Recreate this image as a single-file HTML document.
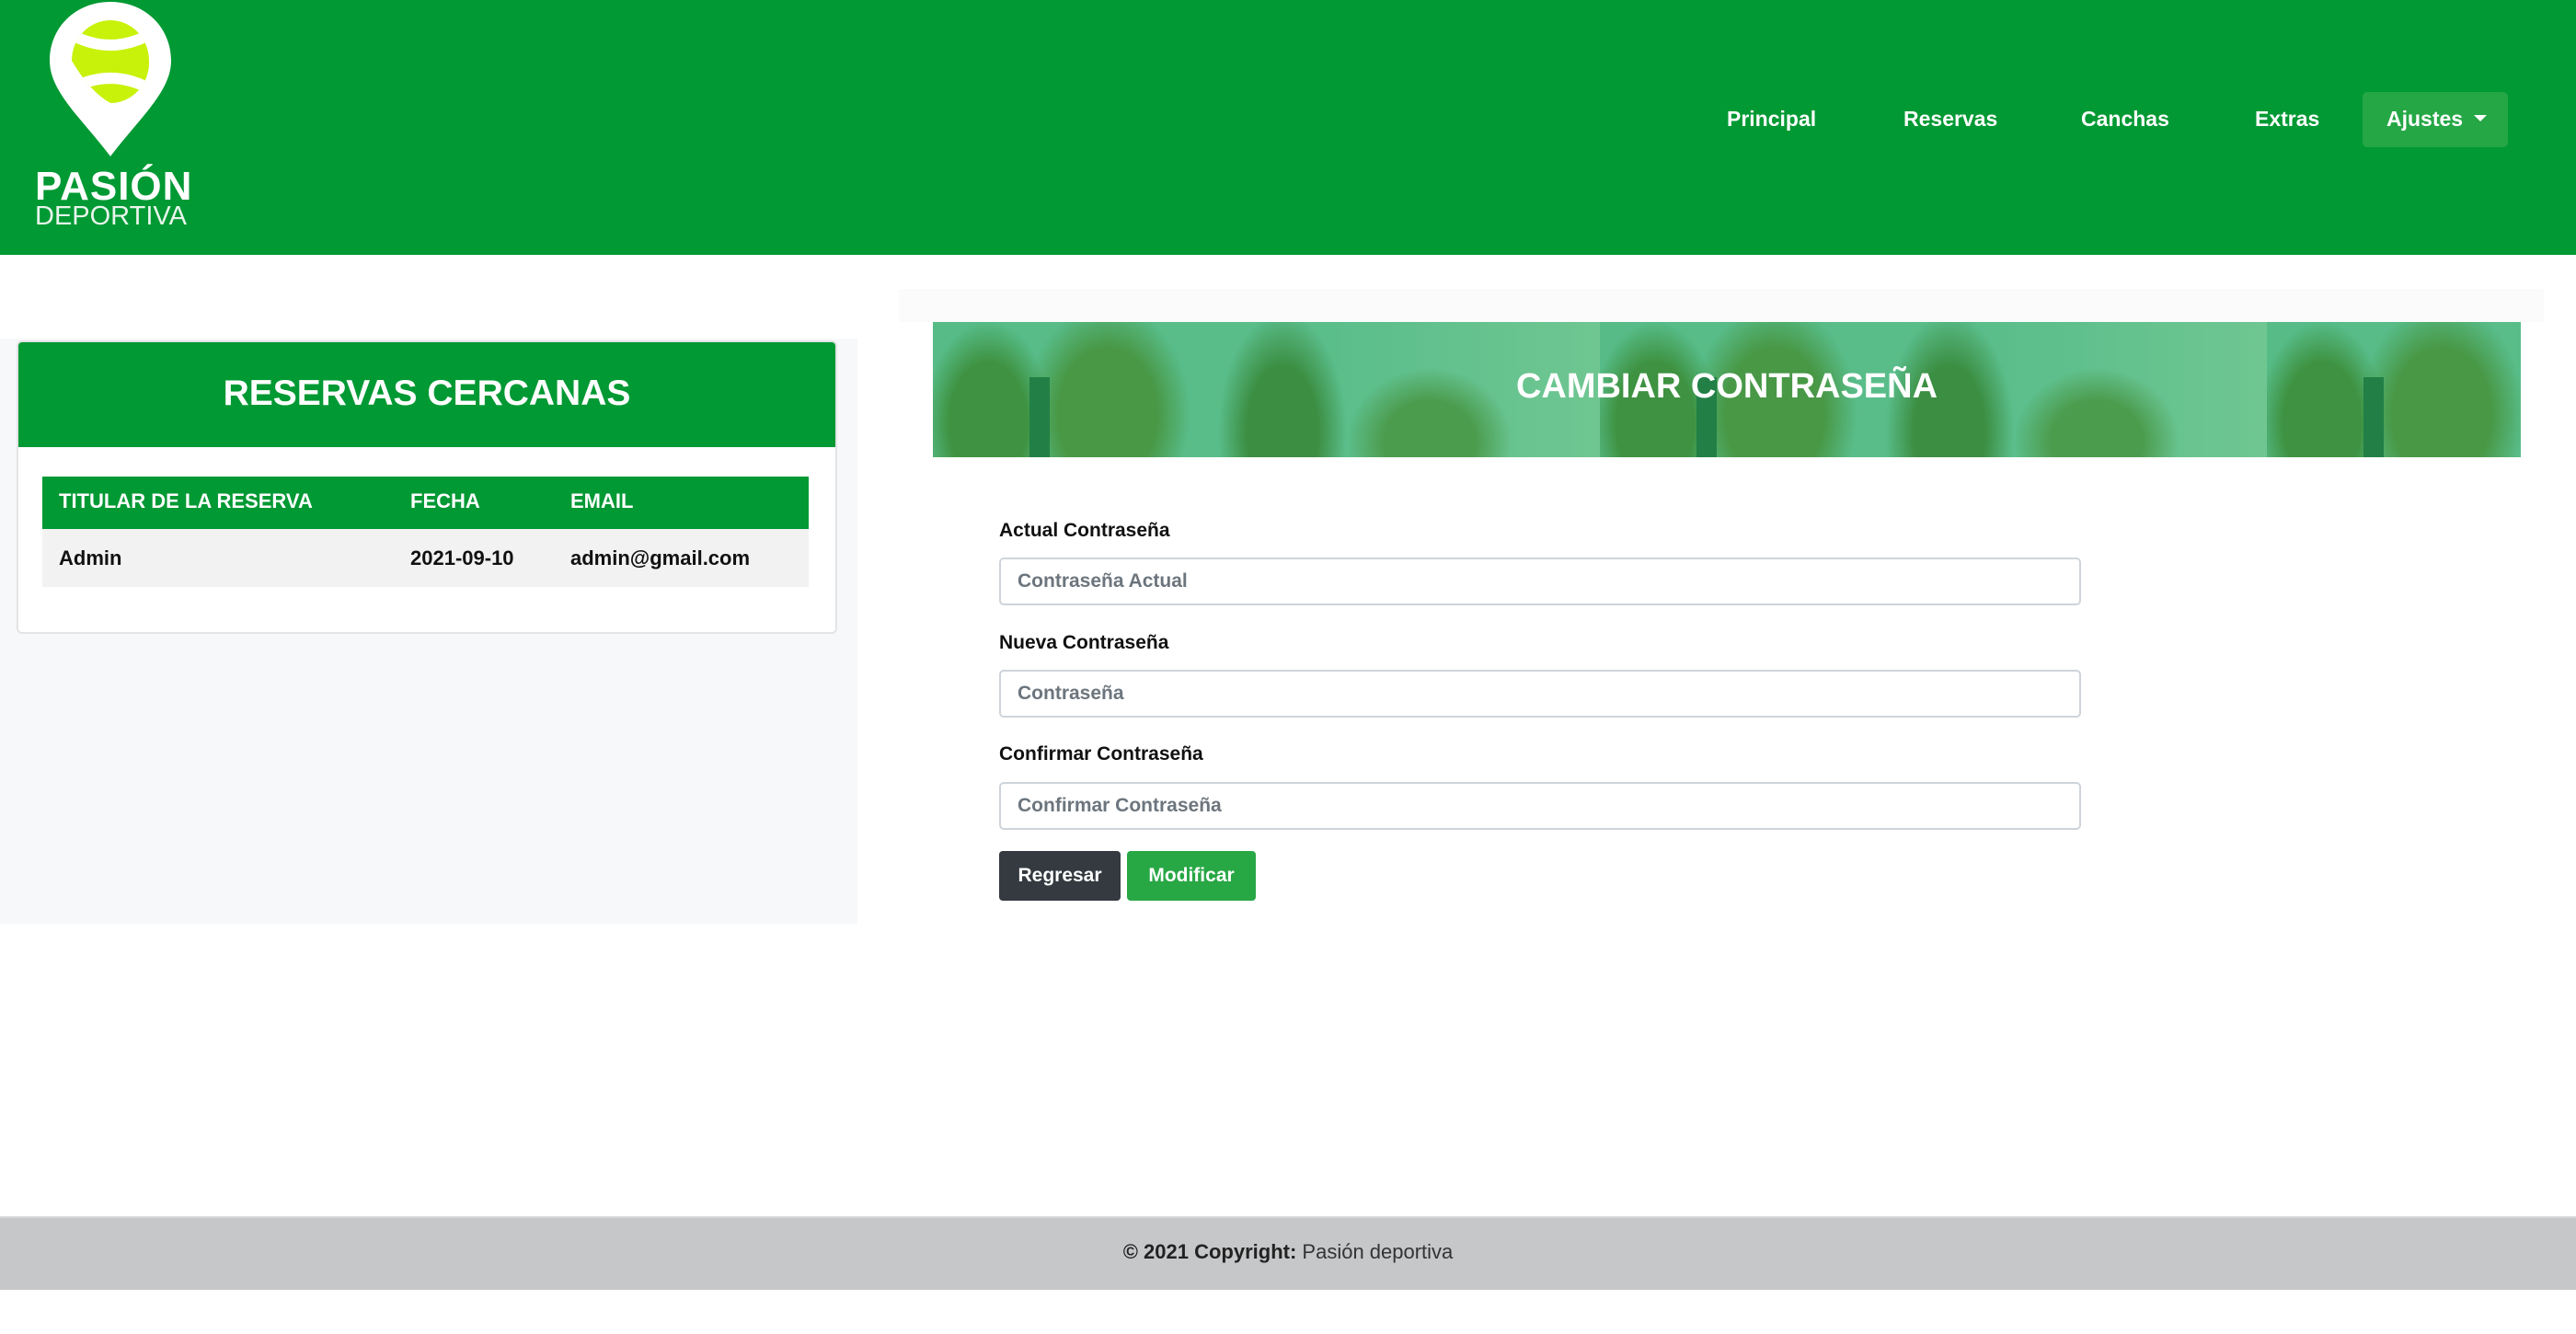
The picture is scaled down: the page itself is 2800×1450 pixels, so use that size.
<!DOCTYPE html>
<html><head><meta charset="utf-8"><style>
*{box-sizing:border-box;margin:0;padding:0}
body{width:2800px;height:1450px;position:relative;background:#fff;font-family:"Liberation Sans",sans-serif;overflow:hidden;color:#212529}
.abs{position:absolute}
header{position:absolute;left:0;top:0;width:2800px;height:277px;background:#009933}
.nav{position:absolute;top:116px;color:#fff;font-weight:bold;font-size:23px}
.aj{position:absolute;left:2568px;top:100px;width:158px;height:60px;background:#25a745;border-radius:5px;color:#fff;font-weight:bold;font-size:23px;line-height:58px;padding-left:26px}
.aj:after{content:"";position:absolute;left:121px;top:25px;border-left:7px solid transparent;border-right:7px solid transparent;border-top:7px solid #fff}
.card{position:absolute;left:18px;top:370px;width:892px;height:319px;background:#fff;border:2px solid #e2e4e6;border-radius:6px;overflow:hidden}
.ch{height:114px;background:#009933;color:#fff;font-weight:bold;font-size:39px;text-align:center;line-height:112px}
.th{position:absolute;top:146px;left:26px;width:833px;height:57px;background:#009933;color:#fff;font-weight:bold;font-size:22px}
.tr{position:absolute;top:203px;left:26px;width:833px;height:63px;background:#f2f2f2;font-weight:bold;font-size:22px;color:#111}
.th span,.tr span{position:absolute;top:0}
.th span{line-height:54px}.tr span{line-height:63px}
.lbl{position:absolute;left:1086px;font-weight:bold;font-size:21px;color:#111}
.inp{position:absolute;left:1086px;width:1176px;height:52px;border:2px solid #ced4da;border-radius:5px;color:#6c757d;font-size:21px;font-weight:bold;line-height:48px;padding-left:18px}
.btn{position:absolute;top:925px;height:54px;border-radius:4px;color:#fff;font-weight:bold;font-size:21px;line-height:54px;text-align:center}
.tile{position:absolute;top:0;width:725px;height:147px;background:
radial-gradient(ellipse 70px 110px at 60px 110px,#3f8f3a 0,#3f8f3a 60%,transparent 100%),
radial-gradient(ellipse 90px 120px at 190px 100px,#4b9640 0,#4b9640 60%,transparent 100%),
radial-gradient(ellipse 70px 130px at 380px 120px,#3c8a3b 0,#3c8a3b 55%,transparent 100%),
radial-gradient(ellipse 90px 80px at 540px 130px,#4f9a48 0,#4f9a48 55%,transparent 100%),
linear-gradient(90deg,#5bbf8c 0,#60c291 60%,#78cc98 100%)}
.post{position:absolute;top:60px;width:22px;height:87px;background:#1e7a40}
</style></head><body>
<header>
<svg class="abs" style="left:50px;top:0" width="140" height="175" viewBox="0 0 140 175">
<path d="M70 2 C32 2 4 30 4 66 C4 100 40 130 70 170 C100 130 136 100 136 66 C136 30 108 2 70 2Z" fill="#fff"/>
<clipPath id="c"><path d="M28 66 A42 44 0 0 1 112 66 A42 44 0 0 1 70 112 Q48 100 28 66Z"/></clipPath>
<g clip-path="url(#c)"><rect x="0" y="0" width="140" height="140" fill="#c8f20a"/>
<path d="M15 30 Q70 68 125 30" stroke="#fff" stroke-width="12" fill="none"/>
<path d="M15 104 Q70 66 125 104" stroke="#fff" stroke-width="12" fill="none"/></g>
</svg>
<div class="abs" style="left:38px;top:178px;color:#fff;font-weight:bold;font-size:44px;letter-spacing:1px">PASIÓN</div>
<div class="abs" style="left:38px;top:219px;color:#e8f5ec;font-size:29px">DEPORTIVA</div>
<div class="nav" style="left:1877px">Principal</div>
<div class="nav" style="left:2069px">Reservas</div>
<div class="nav" style="left:2262px">Canchas</div>
<div class="nav" style="left:2451px">Extras</div>
<div class="aj">Ajustes</div>
</header>
<div class="abs" style="left:0;top:368px;width:932px;height:636px;background:#f7f8fa"></div>
<div class="abs" style="left:977px;top:314px;width:1788px;height:36px;background:#fbfbfc"></div>
<div class="card">
<div class="ch">RESERVAS CERCANAS</div>
<div class="th"><span style="left:18px">TITULAR DE LA RESERVA</span><span style="left:400px">FECHA</span><span style="left:574px">EMAIL</span></div>
<div class="tr"><span style="left:18px">Admin</span><span style="left:400px">2021-09-10</span><span style="left:574px">admin@gmail.com</span></div>
</div>
<div class="abs" style="left:1014px;top:350px;width:1726px;height:147px;overflow:hidden">
<div class="tile" style="left:0"><div class="post" style="left:105px"></div></div>
<div class="tile" style="left:725px"><div class="post" style="left:105px"></div></div>
<div class="tile" style="left:1450px"><div class="post" style="left:105px"></div></div>
<div class="abs" style="left:0;top:0;width:1726px;height:147px;background:rgba(60,170,110,.15)"></div>
<div class="abs" style="left:0;top:0;width:1726px;line-height:140px;text-align:center;color:#fff;font-weight:bold;font-size:38px">CAMBIAR CONTRASEÑA</div>
</div>
<div class="lbl" style="top:565px">Actual Contraseña</div>
<div class="inp" style="top:606px">Contraseña Actual</div>
<div class="lbl" style="top:687px">Nueva Contraseña</div>
<div class="inp" style="top:728px">Contraseña</div>
<div class="lbl" style="top:808px">Confirmar Contraseña</div>
<div class="inp" style="top:850px">Confirmar Contraseña</div>
<div class="btn" style="left:1086px;width:132px;background:#343a40">Regresar</div>
<div class="btn" style="left:1225px;width:140px;background:#28a745">Modificar</div>
<div class="abs" style="left:0;top:1322px;width:2800px;height:80px;background:#c6c7c9;border-top:2px solid #d8d9da;text-align:center;line-height:74px;font-size:22px;font-weight:bold;color:#222">© 2021 Copyright: <span style="font-weight:normal;color:#333">Pasión deportiva</span></div>
</body></html>
